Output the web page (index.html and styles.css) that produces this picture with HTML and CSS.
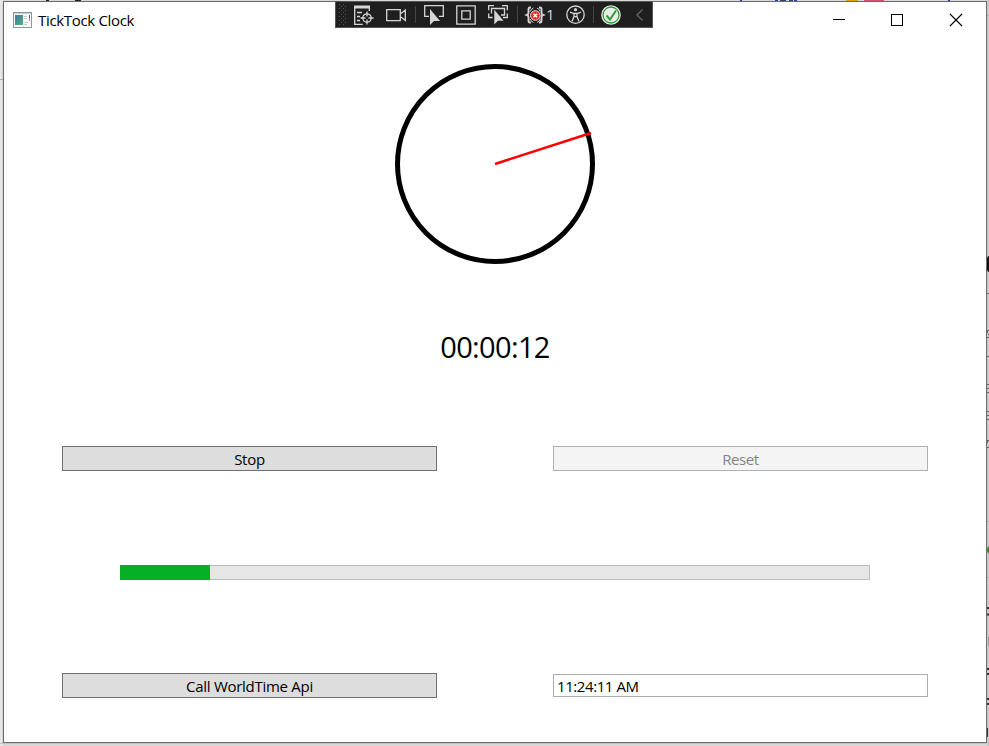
FILE: index.html
```html
<!DOCTYPE html>
<html lang="en">
<head>
<meta charset="utf-8">
<title>TickTock Clock</title>
<link rel="stylesheet" href="styles.css">
</head>
<body>
<div class="desktop">
  <svg class="backdrop" width="989" height="746" aria-hidden="true">
    <rect width="989" height="746" fill="#d8d8d8"/>
    <rect width="3" height="746" fill="#e6e6e6"/>
    <rect x="2" y="4" width="1" height="740" fill="#d2d2d2"/>
    <rect x="987" width="2" height="746" fill="#c9c9c9"/>
    <rect y="743" width="989" height="1" fill="#c2c2c2"/>
    <path d="M46 0h3M75 0h6" stroke="#222" stroke-width="2"/>
    <path d="M740 0h2M775 0h3M794 0h3M948 0h2" stroke="#203fc0" stroke-width="4"/>
    <path d="M780 0h6M789 0h4" stroke="#34415f" stroke-width="2"/>
    <path d="M846 0h12" stroke="#d9a514" stroke-width="3"/>
    <path d="M864 0h20" stroke="#d9526b" stroke-width="3"/>
    <path d="M0 79.500h3M987 15.500h2M987 521.500h2M987 577.500h2" stroke="#adadad"/>
    <ellipse cx="989" cy="264" rx="3" ry="8" fill="#111"/>
    <circle cx="991" cy="550" r="4" fill="#3f7d20"/>
    <path d="M987 293.500h2M987 330.500h2M987.500 331v2M988 334.500h1M987 337.500h2M987 356.500h2M987 384.500h2M987 388.500h2M987 392.500h2M987 411.500h2M987 415.500h2M987 419.500h2M987 440.500h2M987.500 441v2M987 447.500h2" stroke="#666"/>
    <path d="M987 608h2M987 614.500h2M987 669h2M987 674h2M987 699h2M987 704h2" stroke="#333" stroke-width="2"/>
    <path d="M987.500 728v9" stroke="#333"/>
    <path d="M988.500 637v9" stroke="#999"/>
  </svg>
  <main class="window">
    <header class="titlebar">
      <svg class="app-icon" width="20" height="16" viewBox="0 0 20 16">
        <defs><linearGradient id="pane" x1="0" y1="0" x2="1" y2="1"><stop offset="0" stop-color="#3f78a8"/><stop offset="1" stop-color="#55b27a"/></linearGradient></defs>
        <rect x=".5" y=".5" width="18" height="15" fill="#f8f9fb" stroke="#8e979f"/>
        <path d="M1 1.500h17" stroke="#c7ced5"/>
        <rect x="2" y="3" width="8" height="10" fill="url(#pane)"/>
        <path d="M11 4.500h3M11 6.500h3M11 10.500h4M11 12.500h3" stroke="#c9c9c9"/>
        <path d="M16.500 3v3" stroke="#3c62a8"/><path d="M16.500 6v3" stroke="#57b56f"/>
      </svg>
      <span class="title">TickTock Clock</span>
      <div class="controls">
        <svg width="58" height="37"><path d="M17 17.500h12" stroke="#000"/></svg>
        <svg width="58" height="37"><rect x="17.500" y="12.500" width="11" height="11" fill="none" stroke="#000"/></svg>
        <svg width="54" height="37"><path d="M18 12l12 12M30 12l-12 12" stroke="#000" stroke-width="1.100"/></svg>
      </div>
    </header>
    <section class="content">
      <svg class="clock" width="200" height="200" viewBox="0 0 200 200">
        <circle cx="100" cy="100" r="97.500" fill="none" stroke="#000" stroke-width="5"/>
        <path d="M100 100L196 69" stroke="#f00" stroke-width="2.500"/>
      </svg>
      <div class="elapsed"><span>00:00:12</span></div>
      <button class="button"><span>Stop</span></button>
      <button class="button" disabled><span class="reset">Reset</span></button>
      <div class="progress"><div class="progress-fill" style="width:12%"></div></div>
      <button class="button"><span>Call WorldTime Api</span></button>
      <div class="textbox"><span>11:24:11 AM</span></div>
    </section>
  </main>
  <svg class="debug-bar" width="318" height="27" viewBox="335 1 318 27" fill="none" stroke="#d6d6d6" stroke-width="1.300">
    <rect x="335.500" y="1.500" width="317" height="26" fill="#1f1f1f" stroke="#555" stroke-width="1"/>
    <path d="M339.500 4v22M343.500 4v22" stroke="#555" stroke-width="1" stroke-dasharray="1 3"/>
    <path d="M341.500 6v19M345.500 6v19" stroke="#555" stroke-width="1" stroke-dasharray="1 3"/>
    <path d="M354 7h16" stroke-width="3"/>
    <path d="M354.700 7v17.300h8M369.300 8v3M357 12.500h5M357 16.500h3M357 20.500h3"/>
    <circle cx="367" cy="18" r="4.200"/><path d="M367 11.500v5M367 19.500v5M360.500 18h5M368.500 18h5"/>
    <path d="M386.700 9.700h13.600v11h-13.600zM401 13.500l4.300-3.500v10.500l-4.300-3.500"/>
    <path d="M415.500 6v17M517.500 6v17M593.500 6v17" stroke="#454545" stroke-width="1"/>
    <path d="M429 16.300h-4.300V5.700h18.600v10.600H439"/>
    <path d="M430 9v16l4-4 6 0z" fill="#d6d6d6" stroke="none"/>
    <path d="M456.800 5.800h18.400v18.400h-18.400zM461.800 10.800h8.400v8.400h-8.400z"/>
    <path d="M494 5.700h-5.300v4.500M502 5.700h5.300v4.500M488.700 13.500v4h4M507.300 13.500v4H503M491.500 13.500V8.500h13v6.500H501"/>
    <path d="M494 9v16l4-4 6 0z" fill="#d6d6d6" stroke="#1f1f1f" stroke-width=".6"/>
    <path d="M531 7.500h-1q-1.500 0-1.500 2v3q0 2-1.500 2.500 1.500.500 1.500 2.500v3q0 2 1.500 2h1M539 7.500h1q1.500 0 1.500 2v3q0 2 1.500 2.500-1.500.500-1.500 2.500v3q0 2-1.500 2H539" stroke-width="1.900"/>
    <path d="M533.500 8q-2.500 1-3.200 3.500M537 8q2.500 1 3.200 3.500M533.500 22.500q-2.500-1-3.200-3.500M537 22.500q2.500-1 3.200-3.500" stroke-width="1"/>
    <circle cx="535.300" cy="15.500" r="4.800" fill="#ee2b24" stroke="#f5dcdc" stroke-width="1"/>
    <path d="M533.500 13.700l3.600 3.600M537.100 13.700l-3.600 3.600" stroke="#fff" stroke-width="1.500"/>
    <text class="error-count" x="546" y="20">1</text>
    <circle cx="575.500" cy="14.700" r="8.700"/><circle cx="575.500" cy="9.700" r="1.600" fill="#d6d6d6" stroke="none"/>
    <path d="M570 12.200l4 1.300h3l4-1.300M574 13.500v3l-2 5M577 13.500v3l2 5M574 16.700h3"/>
    <circle cx="611" cy="15" r="9.800" fill="#e9eee8" stroke="none"/><circle cx="611" cy="15" r="8" stroke="#319b36"/>
    <path d="M606.500 15.500l3.500 4 6-9" stroke="#319b36" stroke-width="2"/>
    <path d="M642.500 9.500l-5.500 5.500 5.500 5.500" stroke="#666"/>
  </svg>
</div>
</body>
</html>
```
FILE: styles.css
```css
* { box-sizing: border-box; }
body { margin: 0; font-family: "Open Sans", "Noto Sans", sans-serif; font-size: 15px; color: #000; }
.desktop { position: relative; width: 989px; height: 746px; overflow: hidden; padding: 1px 0 0 3px; }
.backdrop { position: absolute; inset: 0; }
.window { position: relative; width: 984px; height: 742px; border: 1px solid #6b6b6b; background: #fff; display: flex; flex-direction: column; }
.titlebar { height: 38px; flex: none; display: flex; align-items: center; padding: 0 0 2px 9px; }
.app-icon { flex: none; margin-right: 5px; }
.title { font-size: 15px; line-height: 20px; letter-spacing: -.33px; white-space: nowrap; }
.controls { display: flex; margin-left: auto; }
.controls svg { display: block; flex: none; }
.content { flex: 1; display: grid; grid-template-columns: 1fr 1fr; grid-template-rows: 248px repeat(4, 1fr); place-items: center; }
.clock, .elapsed, .progress { grid-column: 1 / -1; }
.elapsed { font-size: 29px; line-height: 38px; letter-spacing: -.65px; padding-top: 4px; }
.elapsed span, .button span, .textbox span { display: inline-block; white-space: nowrap; }
.button { width: 375px; height: 25px; padding: 2px 0 0; border: 1px solid #707070; background: #ddd; color: #000; font: 15px/21px "Open Sans", "Noto Sans", sans-serif; letter-spacing: -.28px; }
.button:disabled { border-color: #adb2b5; background: #f4f4f4; color: #838383; }
.reset { letter-spacing: -.45px; }
.progress { width: 750px; height: 15px; margin-top: 1px; border: 1px solid #bcbcbc; background: #e6e6e6; }
.progress-fill { height: 15px; margin: -1px; background: #06b025; }
.textbox { width: 375px; height: 23px; border: 1px solid #abadb3; padding-left: 3px; line-height: 23px; letter-spacing: -.42px; }
.debug-bar { position: absolute; left: 335px; top: 1px; }
.error-count { font: 15px "Open Sans", "Noto Sans", sans-serif; fill: #d6d6d6; stroke: none; }
```
